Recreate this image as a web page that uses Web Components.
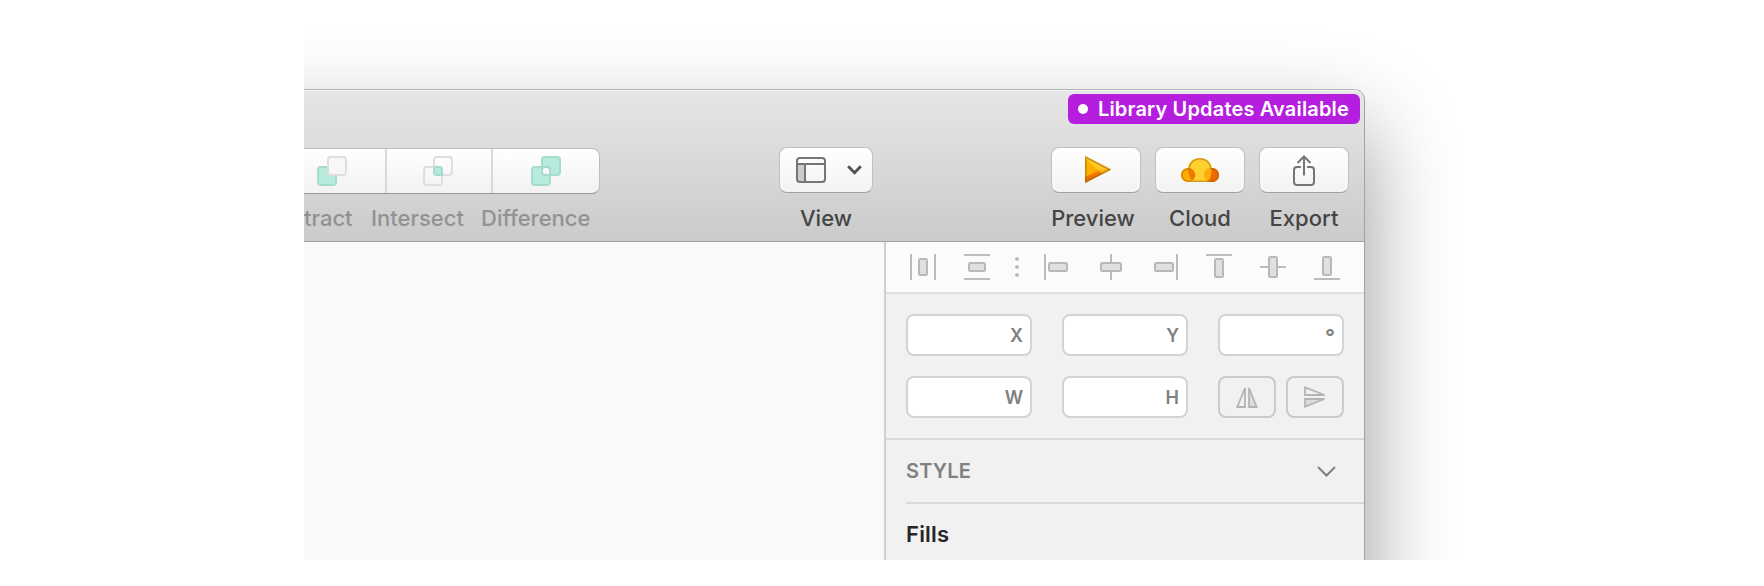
<!DOCTYPE html>
<html lang="en">
<head>
<meta charset="utf-8">
<title>Library updates</title>
<style>
html,body{margin:0;background:#fff}
body{height:586px;overflow:hidden;font-family:Inter,"Liberation Sans",sans-serif}
</style>
</head>
<body>
<app-stage>
<app-window>
<app-toolbar slot="toolbar">
<update-badge slot="badge">Library Updates Available</update-badge>
<segmented-control></segmented-control>
<tool-button icon="view" label="View" style="--w:94px;margin-left:179px"></tool-button>
<tool-button icon="preview" label="Preview" style="margin-left:178px;--shift:-6px"></tool-button>
<tool-button icon="cloud" label="Cloud" style="margin-left:14px"></tool-button>
<tool-button icon="export" label="Export" style="margin-left:14px"></tool-button>
</app-toolbar>
<inspector-panel slot="inspector">
<align-bar slot="align"></align-bar>
<num-field>X</num-field><num-field>Y</num-field><num-field style="font-size:22px;padding-top:3px">°</num-field>
<num-field>W</num-field><num-field>H</num-field><flip-buttons></flip-buttons>
<section-title slot="section">STYLE</section-title>
<span slot="sub">Fills</span>
</inspector-panel>
</app-window>
</app-stage>
<script>
const define = (name, html) => customElements.define(name, class extends HTMLElement {
  constructor() {
    super();
    const markup = typeof html === 'function' ? html(this) : html;
    const t = document.createElement('template');
    t.innerHTML = markup;
    this.attachShadow({mode: 'open'}).append(t.content.cloneNode(true));
  }
});

/* name -> [width, height, svg body] */
const bar = (x, y, w, h) => `<rect x="${x}" y="${y}" width="${w}" height="${h}" fill="#bcbcbc"/>`;
const box = (x, y, w, h) => `<rect x="${x+1}" y="${y+1}" width="${w-2}" height="${h-2}" rx="1.5" fill="#e0e0e0" stroke="#b8b8b8" stroke-width="2"/>`;
const icons = {
  subtract: [30, 30, `<path d="M10 11H4a3 3 0 0 0-3 3v12a3 3 0 0 0 3 3h12a3 3 0 0 0 3-3v-7H14a3 3 0 0 1-3-3v-5z" fill="#b6ebdd" stroke="#a5dccd" stroke-width="2"/><rect x="11" y="1" width="18" height="18" rx="3" fill="#f7f7f7" stroke="#dedede" stroke-width="2"/>`],
  intersect: [30, 30, `<g fill="none" stroke="#dedede" stroke-width="2"><rect x="11" y="1" width="18" height="18" rx="3"/><rect x="1" y="11" width="18" height="18" rx="3"/></g><path d="M14 11h2a3 3 0 0 1 3 3v5h-5a3 3 0 0 1-3-3v-2a3 3 0 0 1 3-3z" fill="#b6ebdd" stroke="#a5dccd" stroke-width="2"/>`],
  difference: [30, 30, `<g fill="#b6ebdd" stroke="#a5dccd" stroke-width="2"><rect x="11" y="1" width="18" height="18" rx="3"/><rect x="1" y="11" width="18" height="18" rx="3"/><path d="M14 11h2a3 3 0 0 1 3 3v5h-5a3 3 0 0 1-3-3v-2a3 3 0 0 1 3-3z" fill="#fafafa"/></g>`],
  view: [30, 26, `<path d="M2 7h7v18H4a3 3 0 0 1-3-3z" fill="#cbcbcb"/><g fill="none" stroke="#757575" stroke-width="2"><rect x="1" y="1" width="28" height="24" rx="3"/><path d="M1 7h28M9 7v18"/></g>`],
  down: [15, 10, `<path d="M1.2 1.2 7.5 7.8l6.300-6.600" fill="none" stroke="#505050" stroke-width="2.800"/>`],
  preview: [26, 28, `<path d="M0 0V27L26 13.500z" fill="#ffb000"/><path d="M0 0V3L18 17.700 26 13.500z" fill="#ffcb2d"/><path d="M0 27V21L17 13 26 13.500z" fill="#ee7203"/><path d="M0 21 12 14 18 17.700z" fill="#ffab00" fill-opacity=".15"/><path d="M12 14 14 12.500 26 13.500 18 17.700z" fill="#ffb81a"/><path d="M.8 1.300V25.700L24.300 13.500z" fill="none" stroke="#a06400" stroke-opacity=".5" stroke-width="1.800"/>`],
  cloud: [38, 24, `<circle cx="7" cy="17" r="7" fill="#ffab00"/><circle cx="31" cy="17" r="7" fill="#ee6a00"/><path d="M7 24A7 7 0 0 0 7 10C7 4 13 0 19 0s12 4.500 12 10a7 7 0 0 0 0 14z" fill="#ffd02e"/><path d="M7 10.200A7 7 0 0 1 11 22.600c-2.500-2.500-4.500-8-4-12.400z" fill="#f07800"/><path d="M7 10.200a7 7 0 0 0 0 13.800h2l2-1.500c-2.500-2.500-4-8-4-12.300z" fill="#ffab00"/><path d="M8 10a7 7 0 0 1 4 12c-3-2-5-7-4-12z" fill="#f07800"/><path d="M31 10a7 7 0 0 1 0 14h-5l1-1c3-3 4-8 4-13z" fill="#ee6a00"/><path d="M30 10a7 7 0 0 0-5 12l2 1c3-3 4-8 3-13z" fill="#ffad0a"/><path d="M7 23.200A6.200 6.200 0 0 1 7 10.800h1C8.500 5 13 .8 19 .8s10.500 4.200 11 10h1a6.200 6.200 0 0 1 0 12.400z" fill="none" stroke="#a86a00" stroke-opacity=".5" stroke-width="1.600"/>`],
  export: [22, 31, `<path d="M8 12H4a3 3 0 0 0-3 3v12a3 3 0 0 0 3 3h14a3 3 0 0 0 3-3V15a3 3 0 0 0-3-3h-4M11 20.500V2M4.500 8 11 1.500 17.500 8" fill="none" stroke="#757575" stroke-width="2"/>`],
  distH: [26, 26, bar(0,0,2,26)+bar(24,0,2,26)+box(8,4,10,18)],
  distV: [26, 26, bar(0,0,26,2)+bar(0,24,26,2)+box(4,8,18,10)],
  dots: [4, 20, `<g fill="#bcbcbc"><circle cx="2" cy="2" r="2"/><circle cx="2" cy="10" r="2"/><circle cx="2" cy="18" r="2"/></g>`],
  left: [24, 26, bar(0,0,2,26)+box(4,8,20,10)],
  center: [22, 26, bar(10,0,2,26)+box(0,8,22,10)],
  right: [24, 26, bar(22,0,2,26)+box(0,8,20,10)],
  top: [26, 26, bar(0,0,26,2)+box(8,4,10,20)],
  middle: [26, 26, bar(0,12,26,2)+box(8,2,10,22)],
  bottom: [26, 26, bar(0,24,26,2)+box(8,2,10,20)],
  flipH: [22, 22, `<g stroke="#b4b4b4" stroke-width="1.800"><path d="M9 2v19H1.300z" fill="none"/><path d="M13 2v19h7.700z" fill="#dcdcdc"/></g>`],
  flipV: [22, 22, `<g stroke="#b4b4b4" stroke-width="1.800"><path d="M1 1.300V9h19.500z" fill="none"/><path d="M1 20.700V13h19.500z" fill="#dcdcdc"/></g>`],
  chevron: [19, 11, `<path d="M1 1 9.500 9.500 18 1" fill="none" stroke="#808080" stroke-width="2"/>`]
};
const icon = (n, css = '') => { const [w, h, b] = icons[n]; return `<svg width="${w}" height="${h}" viewBox="0 0 ${w} ${h}" style="display:block;flex:none;${css}">${b}</svg>`; };

define('app-stage', `<style>:host{display:block;box-sizing:border-box;width:1156px;height:560px;margin-left:304px;padding-top:89px;overflow:hidden}</style><slot></slot>`);

define('app-window', `<style>
:host{display:block;box-sizing:border-box;width:1361px;height:760px;margin-left:-300px;padding-left:300px;border-radius:0 11px 0 0;background:#f9f9f9;border-right:1px solid #a2a2a2;border-top:1px solid #b5b5b5;box-shadow:0 40px 90px rgba(0,0,0,.41)}
.body{display:flex;height:608px}.canvas{width:580px;background:#f9f9f9}
</style><slot name="toolbar"></slot><div class="body"><div class="canvas"></div><slot name="inspector"></slot></div>`);

define('app-toolbar', `<style>
:host{display:block;box-sizing:border-box;height:152px;border-top:1px solid #f4f4f4;border-bottom:1px solid #a0a0a0;border-radius:0 10px 0 0;background:linear-gradient(#e6e6e6,#cbcbcb)}
.title{display:flex;justify-content:flex-end;height:53px;padding:3px 4px 0 0}
.row{display:flex;align-items:flex-start}
</style><div class="title"><slot name="badge"></slot></div><div class="row"><slot></slot></div>`);

define('update-badge', `<style>
:host{display:flex;align-items:center;box-sizing:border-box;width:292px;height:30px;padding-left:10px;border-radius:6px;background:#b51edf;color:#fff;font-size:20px;font-weight:600;white-space:nowrap;letter-spacing:.16px}
i{width:10px;height:10px;margin-right:10px;border-radius:50%;background:#fff;flex:none}
</style><i></i><slot></slot>`);

define('segmented-control', `<style>
:host{display:block;width:296px;margin-top:1px;color:#929292;font-size:22px;line-height:28px;font-weight:450}
.seg{display:flex;box-sizing:border-box;height:46px;border:1px solid #bdbdbd;border-left:0;border-bottom-color:#999;border-radius:0 8px 8px 0;background:linear-gradient(#fff,#f2f2f2)}
.seg div{box-sizing:border-box;border-right:2px solid #d9d9d9;padding-top:7px}
.seg div:last-child{border:0}
.labels{display:flex;margin-top:10px;white-space:nowrap}
</style><div class="seg"><div style="width:83px;padding-left:13px">${icon('subtract')}</div><div style="width:106px;padding-left:36px">${icon('intersect')}</div><div style="padding-left:38px">${icon('difference')}</div></div>
<div class="labels"><span style="width:67px">tract</span><span style="width:110px">Intersect</span><span>Difference</span></div>`);

define('tool-button', el => `<style>
:host{display:block;width:var(--w,90px);color:#454545;font-size:22px;line-height:28px;text-align:center;flex:none;font-weight:450}
.b{display:flex;align-items:center;justify-content:center;box-sizing:border-box;height:46px;border:1px solid #c0c0c0;border-bottom-color:#a2a2a2;border-radius:8px;background:linear-gradient(#fff,#f3f3f3)}
.l{margin-top:11px;margin-left:var(--shift,0)}
</style><div class="b">${icon(el.getAttribute('icon'), {view:'margin-left:5px',preview:'margin-left:3px'}[el.getAttribute('icon')] || '')}${el.getAttribute('icon') === 'view' ? icon('down', 'margin-left:21px') : ''}</div><div class="l">${el.getAttribute('label')}</div>`);

define('inspector-panel', `<style>
:host{display:block;box-sizing:border-box;width:480px;border-left:2px solid #cfcfcf;background:#f1f1f1}
.grid{display:grid;grid-template-columns:126px 126px 126px;gap:20px 30px;padding:20px;border-bottom:2px solid #d9d9d9}
.sub{margin-left:20px;border-top:2px solid #d9d9d9;padding-top:16px;font-size:22px;font-weight:600;line-height:28px;color:#262628;letter-spacing:.2px}
</style><slot name="align"></slot><div class="grid"><slot></slot></div><slot name="section"></slot><div class="sub"><slot name="sub"></slot></div>`);

define('align-bar', `<style>
:host{display:flex;align-items:center;box-sizing:border-box;height:52px;padding:0 24px 0 24px;border-bottom:2px solid #dfdfdf;background:#fbfbfb}
</style>${icon('distH')}${icon('distV','margin-left:28px')}${icon('dots','margin-left:25px')}${icon('left','margin-left:25px')}${icon('center','margin-left:32px')}${icon('right','margin-left:32px')}${icon('top','margin-left:28px')}${icon('middle','margin-left:28px')}${icon('bottom','margin-left:28px')}`);

define('num-field', `<style>
:host{display:flex;align-items:center;justify-content:flex-end;box-sizing:border-box;height:42px;padding-right:7px;border:2px solid #d3d3d3;border-radius:8px;background:#fff;color:#808080;font-size:18px;font-weight:600}
</style><slot></slot>`);

define('flip-buttons', `<style>
:host{display:flex;gap:10px}
div{display:flex;align-items:center;justify-content:center;box-sizing:border-box;width:58px;height:42px;border:2px solid #cacaca;border-radius:8px}
</style><div>${icon('flipH')}</div><div>${icon('flipV')}</div>`);

define('section-title', `<style>
:host{display:flex;align-items:center;justify-content:space-between;height:62px;padding:0 28px 0 20px;color:#808080;font-size:20px;font-weight:600;letter-spacing:.15px}
</style><slot></slot>${icon('chevron')}`);
</script>
</body>
</html>
